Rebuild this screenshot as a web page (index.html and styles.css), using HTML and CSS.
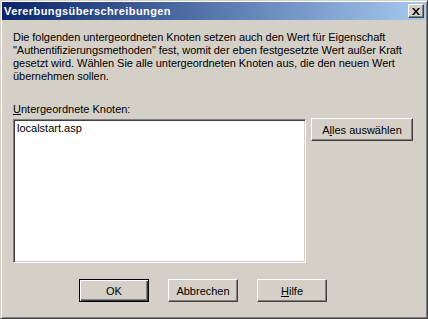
FILE: index.html
```html
<!DOCTYPE html>
<html lang="de">
<head>
    <meta charset="utf-8" />
    <title>Vererbungsüberschreibungen</title>
    <link rel="stylesheet" href="styles.css">
</head>
<body>
    <div class="window">
        <div class="titlebar">
            <span class="title">Vererbungsüberschreibungen</span>
            <button class="close-btn" title="Schließen">
                <svg width="8" height="7" viewBox="0 0 8 7">
                    <path d="M0 0h2l2 2.5L6 0h2L5 3.5 8 7H6L4 4.5 2 7H0l3-3.5z" fill="#000" />
                </svg>
            </button>
        </div>

        <div class="content">
            <p class="intro">
                <span>Die folgenden untergeordneten Knoten setzen auch den Wert für Eigenschaft</span>
                <span>"Authentifizierungsmethoden" fest, womit der eben festgesetzte Wert außer Kraft</span>
                <span>gesetzt wird. Wählen Sie alle untergeordneten Knoten aus, die den neuen Wert</span>
                <span>übernehmen sollen.</span>
            </p>

            <label class="list-label" for="nodeList"><u>U</u>ntergeordnete Knoten:</label>
            <div class="list-row">
                <div class="listbox" id="nodeList">
                    <div class="list-item">localstart.asp</div>
                </div>
                <button class="btn btn-wide">A<u>l</u>les auswählen</button>
            </div>

            <div class="button-row">
                <button class="btn btn-default">OK</button>
                <button class="btn">Abbrechen</button>
                <button class="btn"><u>H</u>ilfe</button>
            </div>
        </div>
    </div>
</body>
</html>
```

FILE: styles.css
```css
/* Page */
body {
    margin: 0;
    font-family: "Liberation Sans", Arial, sans-serif;
    font-size: 11px;
    color: #000;
}

/* Dialog frame */
.window {
    box-sizing: border-box;
    width: 428px;
    height: 319px;
    padding: 1px;
    background-color: #d4d0c8;
    border: 1px solid;
    border-color: #d4d0c8 #404040 #404040 #d4d0c8;
    box-shadow: inset 1px 1px #fff, inset -1px -1px #808080;
    display: flex;
    flex-direction: column;
}

/* Title bar */
.titlebar {
    height: 18px;
    display: flex;
    align-items: center;
    justify-content: space-between;
    padding: 0 2px 0 2px;
    background: linear-gradient(to right, #0a246a, #a6caf0);
}

.title {
    color: #fff;
    font-weight: bold;
    font-size: 11px;
    letter-spacing: 0.4px;
}

.close-btn {
    box-sizing: border-box;
    width: 16px;
    height: 14px;
    padding: 0;
    display: flex;
    align-items: center;
    justify-content: center;
    background-color: #d4d0c8;
    border: 1px solid;
    border-color: #fff #404040 #404040 #fff;
    box-shadow: inset -1px -1px #808080;
}

/* Dialog body */
.content {
    padding: 11px 0 0 11px;
    display: flex;
    flex-direction: column;
}

.intro {
    margin: 0;
    line-height: 13px;
    letter-spacing: -0.05px;
}

    .intro span {
        display: block;
        white-space: nowrap;
    }

.list-label {
    margin-top: 20px;
    line-height: 13px;
}

.list-row {
    display: flex;
    align-items: flex-start;
    margin-top: 3px;
}

/* Sunken list box */
.listbox {
    box-sizing: border-box;
    width: 293px;
    height: 144px;
    background-color: #fff;
    border: 1px solid;
    border-color: #808080 #fff #fff #808080;
    box-shadow: inset 1px 1px #404040, inset -1px -1px #d4d0c8;
    padding: 2px 3px;
}

.list-item {
    line-height: 13px;
}

/* Buttons */
.btn {
    box-sizing: border-box;
    width: 70px;
    height: 23px;
    padding: 0;
    font-family: "Liberation Sans", Arial, sans-serif;
    font-size: 11px;
    color: #000;
    background-color: #d4d0c8;
    border: 1px solid;
    border-color: #fff #404040 #404040 #fff;
    box-shadow: inset -1px -1px #808080;
}

.btn-wide {
    width: 102px;
    margin-left: 5px;
    margin-top: -1px;
}

.btn-default {
    border: 1px solid #000;
    box-shadow: inset 1px 1px #fff, inset -1px -1px #404040, inset -2px -2px #808080;
}

.button-row {
    display: flex;
    gap: 19px;
    margin-top: 16px;
    padding-left: 66px;
}
```
